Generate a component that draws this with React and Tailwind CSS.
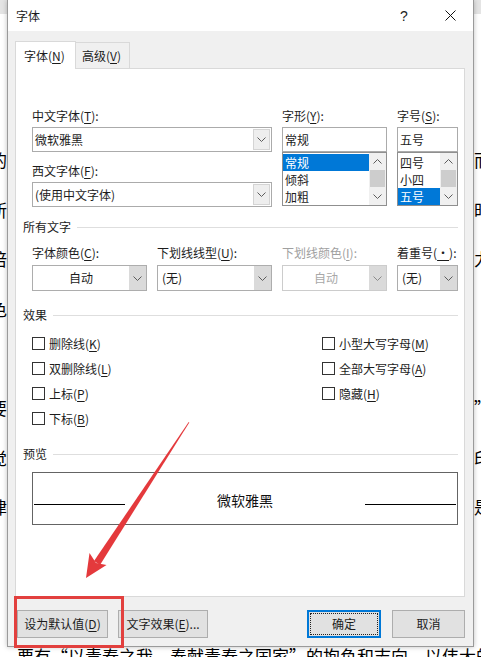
import React from "react";

// access-key letter, underlined like Win32 dialogs
function Key({ children }) {
  return <span className="underline decoration-1 underline-offset-[2px]">{children}</span>;
}

function Chevron({ up = false, color = "#5c5c5c" }) {
  return (
    <svg width="9" height="5" viewBox="0 0 9 5" fill="none">
      <polyline
        points={up ? "0.5,4.5 4.5,0.5 8.5,4.5" : "0.5,0.5 4.5,4.5 8.5,0.5"}
        stroke={color}
        strokeWidth="1"
      />
    </svg>
  );
}

function EditCombo({ value }) {
  return (
    <div className="flex h-[25px] border border-[#ababab] bg-white">
      <div className="flex-1 pl-[2px] leading-[23px]">{value}</div>
      <div className="m-px flex w-[17px] items-center justify-center border border-[#d4d4d4] bg-[#eeeeee]">
        <Chevron />
      </div>
    </div>
  );
}

function DropCombo({ value, center = false, disabled = false }) {
  return (
    <div
      className={
        disabled
          ? "flex h-[26px] border border-[#cccccc] bg-white text-[#a8a8a8]"
          : "flex h-[26px] border border-[#adadad] bg-white"
      }
    >
      <div className={center ? "flex-1 text-center leading-[24px]" : "flex-1 pl-[4px] leading-[24px]"}>
        {value}
      </div>
      <div className="flex w-[17px] items-center justify-center bg-[#dadada]">
        <Chevron color={disabled ? "#8a8a8a" : "#5c5c5c"} />
      </div>
    </div>
  );
}

function ScrollBar() {
  return (
    <div className="flex w-[17px] flex-col bg-[#f0f0f0]">
      <div className="flex h-[17px] items-center justify-center">
        <Chevron up />
      </div>
      <div className="mx-px h-[17px] bg-[#cdcdcd]" />
      <div className="flex flex-1 items-center justify-center">
        <Chevron />
      </div>
    </div>
  );
}

function ListBox({ items, selected }) {
  return (
    <div className="flex h-[54px] border border-[#8f8f8f] bg-white">
      <div className="flex-1 py-px">
        {items.map((it) => (
          <div
            key={it}
            className={
              it === selected
                ? "h-[17px] bg-[#0078d7] pl-[2px] leading-[17px] text-white"
                : "h-[17px] pl-[2px] leading-[17px]"
            }
          >
            {it}
          </div>
        ))}
      </div>
      <ScrollBar />
    </div>
  );
}

function GroupTitle({ title }) {
  return (
    <div className="flex h-[16px] items-center gap-[6px] pl-[7px] pr-[6px]">
      <span>{title}</span>
      <div className="h-px flex-1 bg-[#dedede]" />
    </div>
  );
}

function Check({ children }) {
  return (
    <div className="flex h-[25px] items-center gap-[4px]">
      <div className="h-[13px] w-[13px] border border-[#333333] bg-white" />
      <span>{children}</span>
    </div>
  );
}

// text of the document page behind the dialog
const pageLines = [
  ["", ""],
  ["", ""],
  ["的", "而"],
  ["所", "时"],
  ["倍", "力"],
  ["色", ""],
  ["", ""],
  ["要", "”"],
  ["觉", "印"],
  ["律", "是"],
  ["、", ""],
  ["", ""],
];

function FontDialog() {
  return (
    <div className="absolute left-[7px] top-0 flex h-[647px] w-[467px] flex-col border-x border-b border-[#9a9a9a] bg-[#f0f0f0] text-[12px] leading-[16px] text-[#1c1c1c] shadow-[0_0_5px_rgba(0,0,0,0.25)]">
      {/* title bar */}
      <div className="flex h-[31px] items-center bg-white pl-[8px]">
        <span>字体</span>
        <div className="ml-auto flex w-[46px] justify-center font-['Liberation_Sans',sans-serif] text-[14px]">?</div>
        <div className="flex w-[46px] justify-center">
          <svg width="11" height="11" viewBox="0 0 11 11">
            <path d="M0.5 0.5 L10.5 10.5 M10.5 0.5 L0.5 10.5" stroke="#111" strokeWidth="1" />
          </svg>
        </div>
      </div>

      {/* tabs */}
      <div className="ml-[7px] mt-[10px] flex items-end">
        <div className="relative z-10 -mb-px flex h-[28px] w-[61px] items-center border-x border-t border-[#d9d9d9] bg-white pl-[8px]">
          字体(<Key>N</Key>)
        </div>
        <div className="flex h-[26px] w-[54px] items-center border-r border-t border-[#d9d9d9] pl-[6px]">
          高级(<Key>V</Key>)
        </div>
      </div>

      {/* tab page */}
      <div className="ml-[7px] mr-[8px] h-[529px] border border-[#d9d9d9] bg-white">
        <div className="flex gap-[10px] pl-[16px] pt-[39px]">
          <div className="w-[240px]">
            <div>中文字体(<Key>T</Key>):</div>
            <div className="mt-[3px]">
              <EditCombo value="微软雅黑" />
            </div>
            <div className="mt-[11px]">西文字体(<Key>F</Key>):</div>
            <div className="mt-[3px]">
              <EditCombo value="(使用中文字体)" />
            </div>
          </div>
          <div className="w-[105px]">
            <div>字形(<Key>Y</Key>):</div>
            <div className="mt-[3px] h-[25px] border border-[#ababab] pl-[2px] leading-[23px]">常规</div>
            <ListBox items={["常规", "倾斜", "加粗"]} selected="常规" />
          </div>
          <div className="w-[61px]">
            <div>字号(<Key>S</Key>):</div>
            <div className="mt-[3px] h-[25px] border border-[#ababab] pl-[2px] leading-[23px]">五号</div>
            <ListBox items={["四号", "小四", "五号"]} selected="五号" />
          </div>
        </div>

        <div className="mt-[12px]">
          <GroupTitle title="所有文字" />
        </div>
        <div className="mt-[10px] flex gap-[10px] pl-[16px]">
          <div className="w-[115px]">
            <div>字体颜色(<Key>C</Key>):</div>
            <div className="mt-[4px]">
              <DropCombo value="自动" center />
            </div>
          </div>
          <div className="w-[115px]">
            <div>下划线线型(<Key>U</Key>):</div>
            <div className="mt-[4px]">
              <DropCombo value="(无)" />
            </div>
          </div>
          <div className="w-[105px]">
            <div className="text-[#a0a0a0]">下划线颜色(<Key>I</Key>):</div>
            <div className="mt-[4px]">
              <DropCombo value="自动" center disabled />
            </div>
          </div>
          <div className="w-[61px]">
            <div>着重号(<Key>·</Key>):</div>
            <div className="mt-[4px]">
              <DropCombo value="(无)" />
            </div>
          </div>
        </div>

        <div className="mt-[16px]">
          <GroupTitle title="效果" />
        </div>
        <div className="mt-[8px] flex pl-[16px]">
          <div className="w-[290px]">
            <Check>删除线(<Key>K</Key>)</Check>
            <Check>双删除线(<Key>L</Key>)</Check>
            <Check>上标(<Key>P</Key>)</Check>
            <Check>下标(<Key>B</Key>)</Check>
          </div>
          <div>
            <Check>小型大写字母(<Key>M</Key>)</Check>
            <Check>全部大写字母(<Key>A</Key>)</Check>
            <Check>隐藏(<Key>H</Key>)</Check>
          </div>
        </div>

        <div className="mt-[15px]">
          <GroupTitle title="预览" />
        </div>
        <div className="ml-[16px] mt-[10px] flex h-[53px] w-[426px] items-start border border-[#646464] px-px">
          <div className="mt-[31px] h-px w-[91px] bg-black" />
          <div className="mt-[18px] flex-1 text-center text-[14px] leading-[18px] text-[#111]">微软雅黑</div>
          <div className="mt-[31px] h-px w-[91px] bg-black" />
        </div>
      </div>

      {/* dialog buttons */}
      <div className="mt-[13px] flex pl-[9px] pr-[8px]">
        <button className="h-[28px] w-[91px] border border-[#adadad] bg-[#e1e1e1]">
          设为默认值(<Key>D</Key>)
        </button>
        <button className="ml-[10px] h-[28px] w-[90px] border border-[#adadad] bg-[#e1e1e1]">
          文字效果(<Key>E</Key>)...
        </button>
        <button className="ml-auto h-[28px] w-[74px] border-2 border-[#0078d7] bg-[#e1e1e1] p-px">
          <div className="flex h-full items-center justify-center border border-dotted border-[#222]">确定</div>
        </button>
        <button className="ml-[11px] h-[28px] w-[73px] border border-[#adadad] bg-[#e1e1e1]">取消</button>
      </div>
    </div>
  );
}

export default function App() {
  return (
    <div className="relative h-[657px] w-[481px] overflow-hidden bg-white font-['Noto_Sans_CJK_SC','Microsoft_YaHei',sans-serif]">
      {/* document page */}
      <div className="h-[14px] bg-[#e4e4e4]" />
      <div className="pt-[22px] text-[17px] leading-[49.6px] text-black">
        {pageLines.map(([l, r], i) => (
          <div key={i} className="flex h-[49.6px] whitespace-nowrap">
            <span className="-ml-[10px] w-[484px] shrink-0">{l}</span>
            <span>{r}</span>
          </div>
        ))}
        <div className="whitespace-nowrap pl-[17px]">要有“以青春之我，奉献青春之国家”的抱负和志向，以伟大的</div>
      </div>

      <FontDialog />

      {/* annotation: red frame and arrow */}
      <div className="absolute left-[14px] top-[596px] h-[52px] w-[110px] border-[3px] border-[#e2403e]" />
      <svg className="pointer-events-none absolute left-0 top-0" width="481" height="657" viewBox="0 0 481 657">
        <polygon points="188.7,422 189.3,422.4 100,565 94,561" fill="#e4393c" />
        <polygon points="86,578 89.5,553 96,563 106.5,565" fill="#e4393c" />
      </svg>
    </div>
  );
}
